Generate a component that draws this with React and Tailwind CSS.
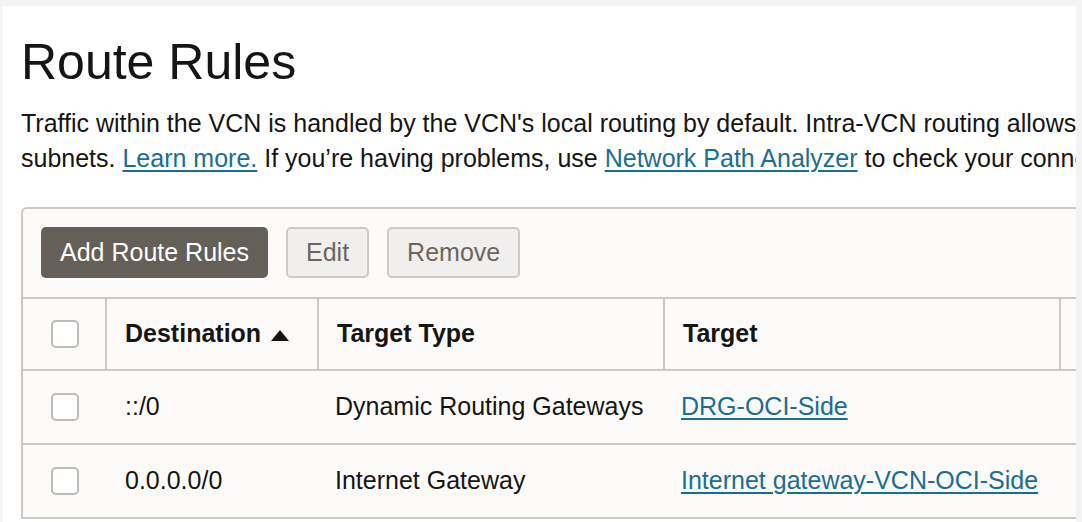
import React from "react";

function Checkbox() {
  return <div className="w-[28px] h-[28px] rounded-[5px] border-2 border-[#bfbbb7] bg-white" />;
}

function SortUp() {
  return (
    <svg width="18" height="11" viewBox="0 0 18 11" className="ml-[10px] mt-[2px]">
      <polygon points="9,0 18,11 0,11" fill="#161513" />
    </svg>
  );
}

const rows = [
  { dest: "::/0", type: "Dynamic Routing Gateways", target: "DRG-OCI-Side" },
  { dest: "0.0.0.0/0", type: "Internet Gateway", target: "Internet gateway-VCN-OCI-Side" },
];

export default function App() {
  return (
    <div className="min-h-screen bg-[#f3f3f3] pt-[6px] pl-[3px] font-['Liberation_Sans',Arial,sans-serif] text-[#161513]">
      <div className="w-[1073px] h-[516px] bg-white overflow-hidden pl-[18px] pt-[31px]">
        <h1 className="text-[50px] leading-[50px] font-normal">Route Rules</h1>
        <p className="mt-[19px] text-[25px] leading-[35px] whitespace-nowrap">
          Traffic within the VCN is handled by the VCN's local routing by default. Intra-VCN routing allows traffic between
          <br />
          subnets.{" "}
          <a className="text-[#1a6e92] underline underline-offset-[3px]">Learn more.</a>{" "}
          If you’re having problems, use{" "}
          <a className="text-[#1a6e92] underline underline-offset-[3px]">Network Path Analyzer</a>{" "}
          to check your connectivity.
        </p>

        <div className="mt-[31px] w-[1400px] bg-[#fcfbfa] border-t-2 border-l-2 border-[#cdcac6] rounded-tl-[6px]">
          <div className="flex items-center gap-[18px] pl-[18px] pt-[18px] pb-[19px] border-b-2 border-[#cdcac6]">
            <button className="h-[51px] px-[19px] rounded-[5px] bg-[#655f5a] text-white text-[25px]">
              Add Route Rules
            </button>
            <button className="h-[51px] px-[18px] rounded-[5px] bg-[#f1efed] border-2 border-[#cdcac6] text-[#6b6661] text-[25px]">
              Edit
            </button>
            <button className="h-[51px] px-[18px] rounded-[5px] bg-[#f1efed] border-2 border-[#cdcac6] text-[#6b6661] text-[25px]">
              Remove
            </button>
          </div>

          <div className="grid grid-cols-[82px_212px_346px_396px_300px] h-[72px] border-b-2 border-[#cdcac6] text-[25px] font-bold">
            <div className="flex items-center justify-center pl-[2px]">
              <Checkbox />
            </div>
            <div className="flex items-center border-l-2 border-[#cdcac6] pl-[18px]">
              Destination
              <SortUp />
            </div>
            <div className="flex items-center border-l-2 border-[#cdcac6] pl-[18px]">Target Type</div>
            <div className="flex items-center border-l-2 border-[#cdcac6] pl-[18px]">Target</div>
            <div className="flex items-center border-l-2 border-[#cdcac6] pl-[18px]"></div>
          </div>

          {rows.map((r) => (
            <div
              key={r.dest}
              className="grid grid-cols-[82px_212px_346px_396px_300px] h-[74px] border-b-2 border-[#cdcac6] text-[25px]"
            >
              <div className="flex items-center justify-center pl-[2px]">
                <Checkbox />
              </div>
              <div className="flex items-center pl-[20px]">{r.dest}</div>
              <div className="flex items-center pl-[18px]">{r.type}</div>
              <div className="flex items-center pl-[18px]">
                <a className="text-[#1a6e92] underline underline-offset-[3px]">{r.target}</a>
              </div>
              <div />
            </div>
          ))}
        </div>
      </div>
    </div>
  );
}
